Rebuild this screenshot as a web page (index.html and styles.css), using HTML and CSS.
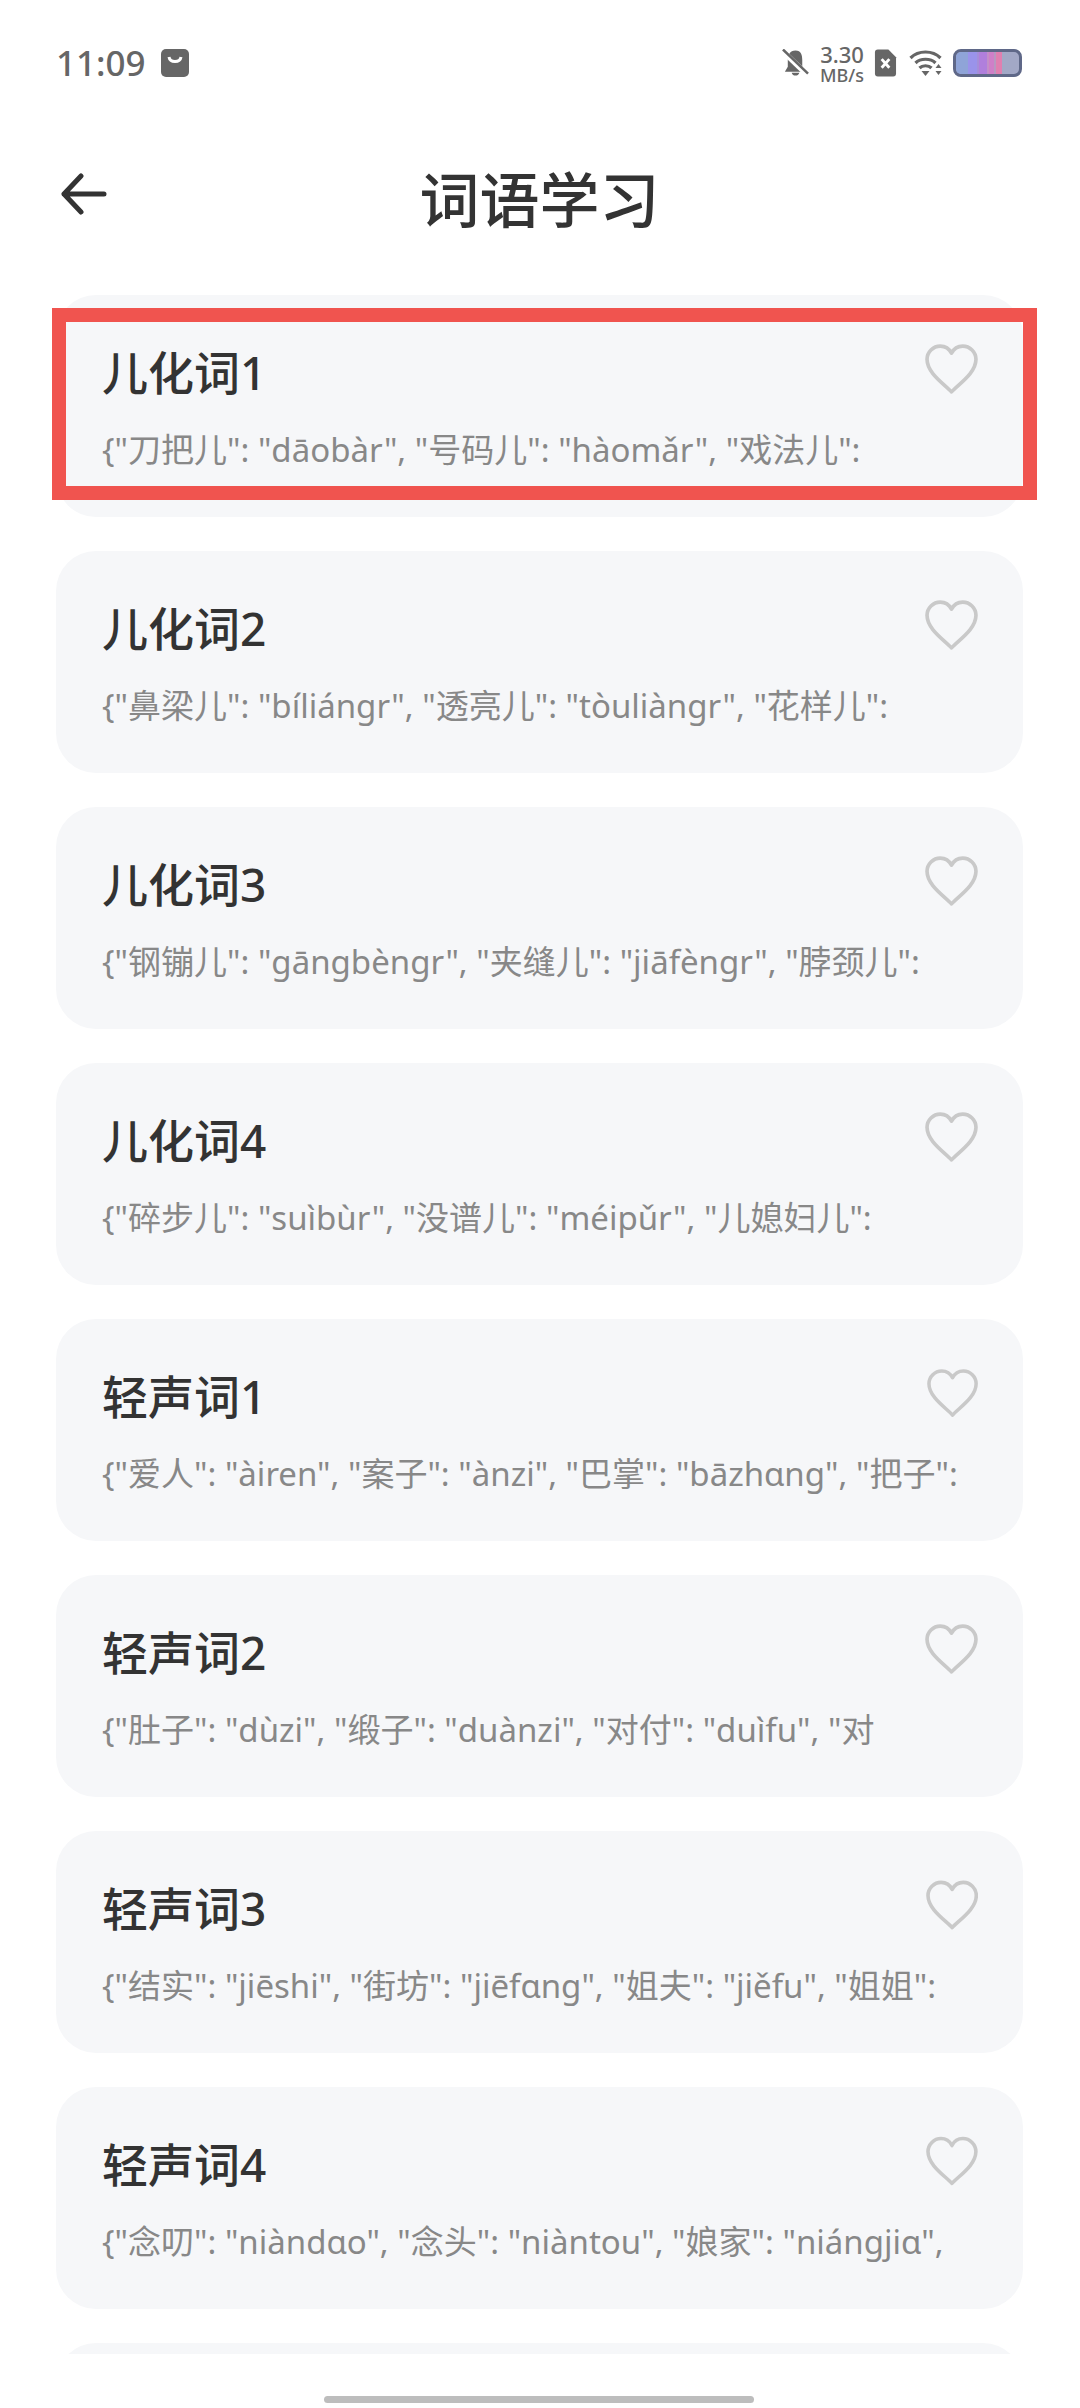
FILE: index.html
```html
<!DOCTYPE html>
<html lang="zh">
<head>
<meta charset="utf-8">
<title>词语学习</title>
<link rel="stylesheet" href="styles.css">
</head>
<body>
<svg width="0" height="0" class="defs"><defs>
<symbol id="heart" viewBox="0 0 52 50"><path d="M26 47 C20 40 2 29 2 15 C2 8 8 2 15 2 C20 2 24 5 26 9 C28 5 32 2 37 2 C44 2 50 8 50 15 C50 29 32 40 26 47 Z" fill="none" stroke="#c9c9c9" stroke-width="3.6" stroke-linejoin="round"/></symbol>
</defs></svg>
<div class="app">
  <div class="status">
    <div class="status-left">
      <span class="time">11:09</span>
      <svg class="bag" viewBox="0 0 28 28"><rect width="28" height="28" rx="5" fill="#666"/><path d="M8 8 C9 14 19 14 20 8" fill="none" stroke="#fff" stroke-width="3"/></svg>
    </div>
    <div class="status-right">
      <svg class="bell" viewBox="0 0 28 28"><path d="M14 1 C8 1 6 6 6 11 L6 18 L3 23 L24 23 L21 18 L21 11 C21 6 20 1 14 1 Z M10 24 C11 28 17 28 18 24 Z" fill="#666"/><path d="M1 2 L27 27" stroke="#fff" stroke-width="5.5"/><path d="M1 0 L27 25" stroke="#666" stroke-width="2.6"/></svg>
      <div class="speed"><span class="rate">3.30</span><span class="unit">MB/s</span></div>
      <svg class="sim" viewBox="0 0 24 30"><path d="M4 1 H15 L23 9 V26 Q23 29 20 29 H4 Q1 29 1 26 V4 Q1 1 4 1 Z" fill="#666"/><path d="M8 11 L16 20 M16 11 L8 20" stroke="#fff" stroke-width="3"/></svg>
      <svg class="wifi" viewBox="0 0 36 28"><path d="M2 9 C10 1 24 1 32 9 M7 14 C12 9 22 9 27 14 M11 19 C14 16 20 16 23 19" fill="none" stroke="#666" stroke-width="3.2"/><path d="M13 22 H21 L17 27 Z" fill="#666"/><path d="M30 15 L33 19 H27 Z M27 22 H33 L30 26 Z" fill="#666"/></svg>
      <div class="battery"><div class="charge"></div></div>
    </div>
  </div>
  <div class="header">
    <svg class="back" viewBox="0 0 46 42"><path d="M3 21 H43 M20 3 L3 21 L20 39" fill="none" stroke="#333" stroke-width="5" stroke-linecap="round" stroke-linejoin="round"/></svg>
    <h1 class="title">词语学习</h1>
  </div>
  <div class="list">
    <div class="card">
      <div class="card-text"><div class="name">儿化词1</div><div class="desc">{"刀把儿": "dāobàr", "号码儿": "hàomǎr", "戏法儿":</div></div>
      <svg class="heart"><use href="#heart"/></svg>
      <div class="highlight"></div>
    </div>
    <div class="card">
      <div class="card-text"><div class="name">儿化词2</div><div class="desc">{"鼻梁儿": "bíliángr", "透亮儿": "tòuliàngr", "花样儿":</div></div>
      <svg class="heart"><use href="#heart"/></svg>
    </div>
    <div class="card">
      <div class="card-text"><div class="name">儿化词3</div><div class="desc">{"钢镚儿": "gāngbèngr", "夹缝儿": "jiāfèngr", "脖颈儿":</div></div>
      <svg class="heart"><use href="#heart"/></svg>
    </div>
    <div class="card">
      <div class="card-text"><div class="name">儿化词4</div><div class="desc">{"碎步儿": "suìbùr", "没谱儿": "méipǔr", "儿媳妇儿":</div></div>
      <svg class="heart"><use href="#heart"/></svg>
    </div>
    <div class="card">
      <div class="card-text"><div class="name">轻声词1</div><div class="desc">{"爱人": "àiren", "案子": "ànzi", "巴掌": "bāzhɑng", "把子":</div></div>
      <svg class="heart"><use href="#heart"/></svg>
    </div>
    <div class="card">
      <div class="card-text"><div class="name">轻声词2</div><div class="desc">{"肚子": "dùzi", "缎子": "duànzi", "对付": "duìfu", "对</div></div>
      <svg class="heart"><use href="#heart"/></svg>
    </div>
    <div class="card">
      <div class="card-text"><div class="name">轻声词3</div><div class="desc">{"结实": "jiēshi", "街坊": "jiēfɑng", "姐夫": "jiěfu", "姐姐":</div></div>
      <svg class="heart"><use href="#heart"/></svg>
    </div>
    <div class="card">
      <div class="card-text"><div class="name">轻声词4</div><div class="desc">{"念叨": "niàndɑo", "念头": "niàntou", "娘家": "niángjiɑ",</div></div>
      <svg class="heart"><use href="#heart"/></svg>
    </div>
    <div class="card"></div>
  </div>
  <div class="footer"><div class="home"></div></div>
</div>
</body>
</html>
```
FILE: styles.css
```css
* { box-sizing: border-box; }
html, body { margin: 0; padding: 0; background: #fff; }
body { font-family: "Noto Sans", "Noto Sans CJK SC", sans-serif; }
.defs { position: absolute; }
.app { width: 1080px; height: 2408px; display: flex; flex-direction: column; overflow: hidden; background: #fff; }

.status { height: 126px; flex: none; display: flex; justify-content: space-between; align-items: flex-start; padding: 43px 58px 0 56px; }
.status-left { display: flex; align-items: center; gap: 15px; height: 40px; }
.time { font-size: 35px; line-height: 40px; color: #666; font-weight: 500; }
.bag { width: 28px; height: 28px; }
.status-right { display: flex; align-items: center; height: 40px; }
.bell { width: 27px; height: 28px; margin-right: 11px; }
.speed { display: flex; flex-direction: column; align-items: center; color: #666; font-weight: 500; margin-right: 10px; }
.rate { font-size: 22px; line-height: 23px; }
.unit { font-size: 18px; line-height: 18px; }
.sim { width: 23px; height: 30px; margin-right: 11px; }
.wifi { width: 37px; height: 28px; margin-right: 8px; }
.battery { width: 69px; height: 28px; border: 3px solid #5f6888; border-radius: 8px; background: #a2a8c6; overflow: hidden; }
.charge { width: 46px; height: 100%; background: linear-gradient(90deg, #8fa4d8 0 26%, #9a93ea 26% 46%, #a48fd8 46% 50%, #b07fdc 50% 68%, #c28fc8 68% 72%, #cf7fc8 72% 82%, #b898c0 82% 86%, #e07fb0 86% 100%); }

.header { height: 169px; flex: none; display: flex; align-items: flex-start; justify-content: center; position: relative; }
.back { position: absolute; left: 61px; top: 47px; width: 46px; height: 42px; }
.title { margin: 0; font-family: "Noto Sans CJK SC", sans-serif; font-size: 60px; line-height: 86px; font-weight: 500; color: #333; padding-top: 28px; margin-right: 1px; }

.list { height: 2059px; flex: none; overflow: hidden; display: flex; flex-direction: column; gap: 34px; padding: 0 57px 0 56px; }
.card { position: relative; flex: none; height: 222px; border-radius: 40px; background: #f6f7f9; display: flex; justify-content: space-between; padding: 0 46px; }
.card-text { display: flex; flex-direction: column; min-width: 0; }
.name { font-family: "Noto Sans", "Noto Sans CJK SC", sans-serif; font-size: 46px; line-height: 64px; font-weight: 500; color: #333; margin-top: 45px; }
.desc { font-family: "Noto Sans", "Noto Sans CJK SC", sans-serif; font-size: 33px; line-height: 46px; color: #888; white-space: nowrap; margin-top: 23px; }
.heart { width: 53px; height: 51px; margin-top: 49px; margin-right: -1px; }
.highlight { position: absolute; left: -4px; top: 13px; width: 985px; height: 192px; border: 14px solid #f0544f; }

.footer { flex: 1; position: relative; }
.home { position: absolute; left: 324px; bottom: 5px; width: 430px; height: 7px; border-radius: 4px; background: #bdbdbd; }
```
